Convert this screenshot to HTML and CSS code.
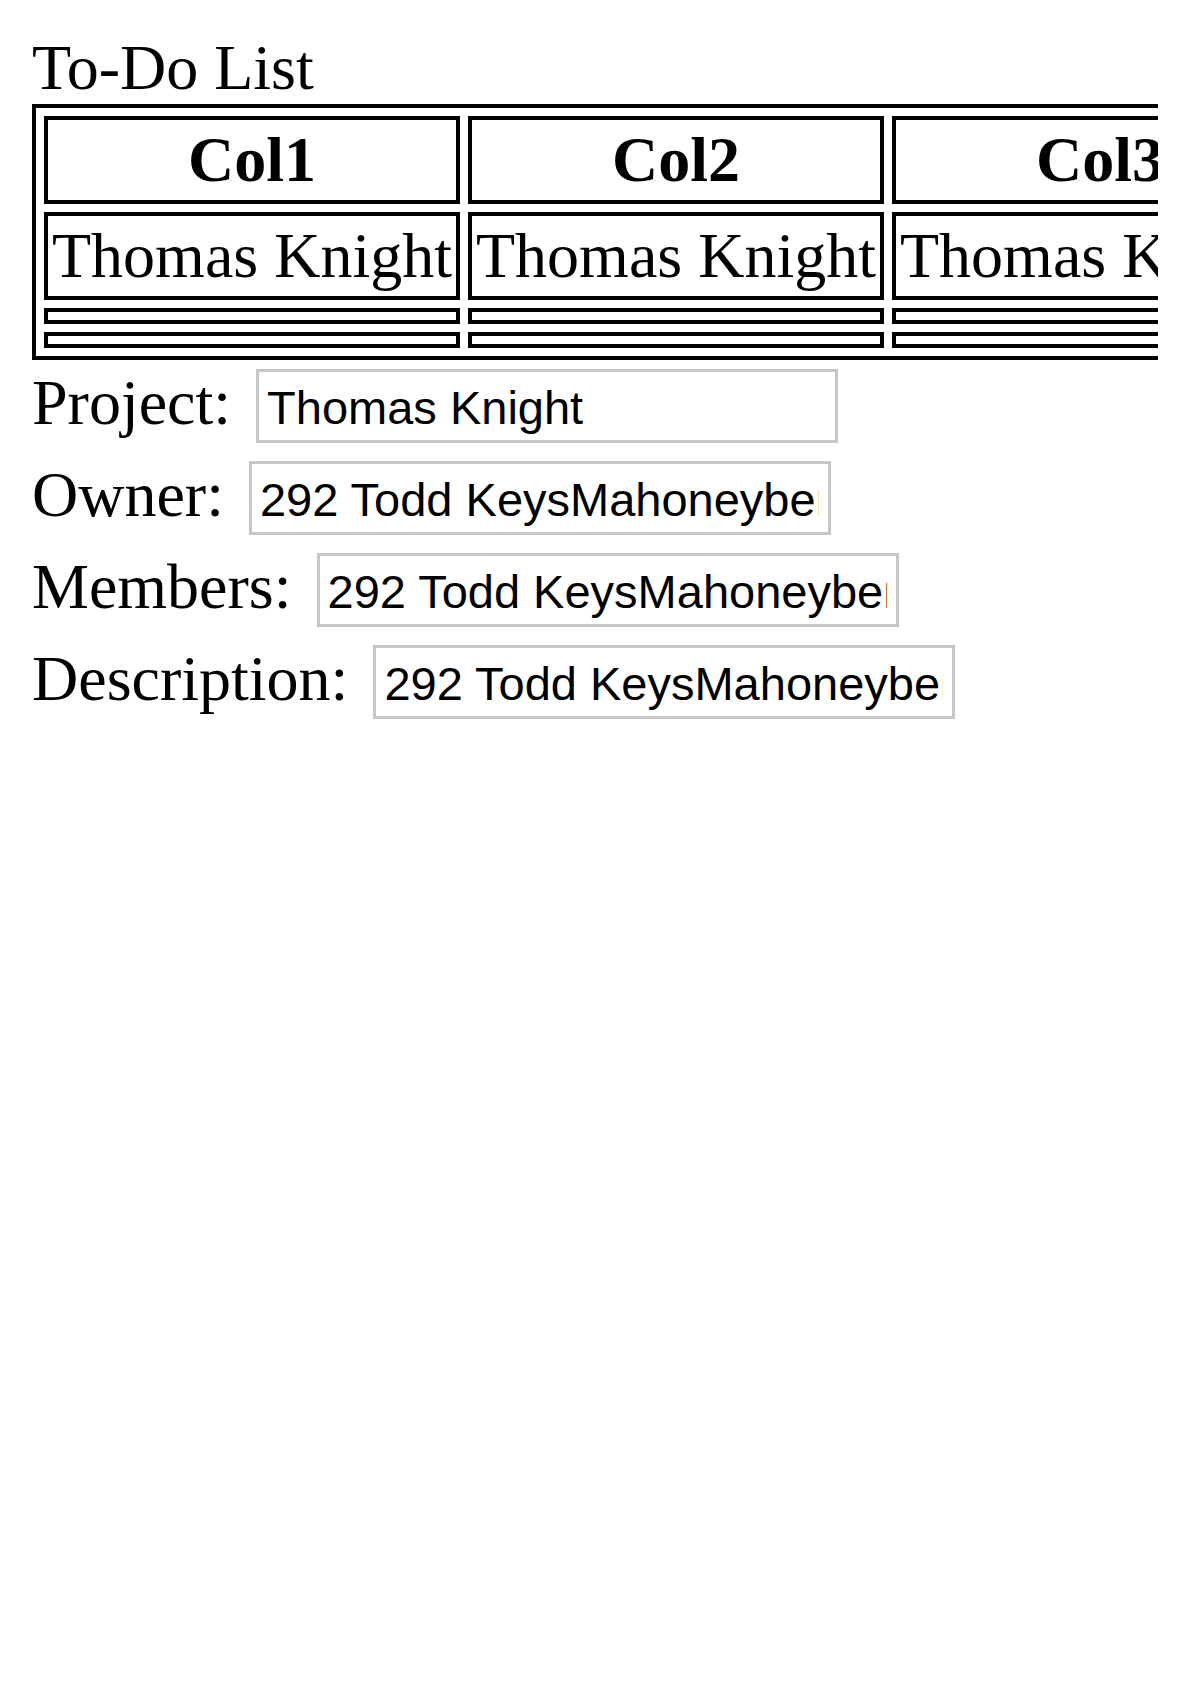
FILE: index.html
```html
<!DOCTYPE html>
<html>
<head>
<meta charset="utf-8">
<title>To-Do List</title>
<link rel="stylesheet" href="styles.css">
</head>
<body>
<div class="title">To-Do List</div>
<div class="table-wrap">
<table class="grid">
  <thead>
    <tr><th>Col1</th><th>Col2</th><th>Col3</th></tr>
  </thead>
  <tbody>
    <tr><td>Thomas Knight</td><td>Thomas Knight</td><td>Thomas Knight</td></tr>
    <tr><td></td><td></td><td></td></tr>
    <tr><td></td><td></td><td></td></tr>
  </tbody>
</table>
</div>
<form class="form">
  <div class="row"><label class="lbl">Project:</label><input class="field" type="text" value="Thomas Knight"></div>
  <div class="row"><label class="lbl">Owner:</label><input class="field" type="text" value="292 Todd KeysMahoneyberg Suite 120"></div>
  <div class="row"><label class="lbl">Members:</label><input class="field" type="text" value="292 Todd KeysMahoneyberg Suite 120"></div>
  <div class="row"><label class="lbl">Description:</label><input class="field" type="text" value="292 Todd KeysMahoneyberg Suite 120"></div>
</form>
</body>
</html>
```
FILE: styles.css
```css
html {
  background: #ffffff;
  overflow: hidden;
}
body {
  margin: 32px;
  font-family: "Liberation Serif", "Times New Roman", serif;
  font-size: 64px;
  line-height: 72px;
  color: #000;
}
.title {
  white-space: nowrap;
}
.table-wrap {
  width: calc(100vw - 32px);
  overflow: hidden;
}
.grid {
  width: 1288px;
  table-layout: fixed;
  border: 4px solid #000;
  border-collapse: separate;
  border-spacing: 8px;
  white-space: nowrap;
}
.grid th,
.grid td {
  width: 400px;
  border: 4px solid #000;
  padding: 4px;
  line-height: 72px;
}
.grid th {
  font-weight: bold;
  text-align: center;
}
.grid td {
  text-align: left;
}
.form {
  margin: 0;
}
.row {
  display: flex;
  align-items: baseline;
  gap: 25px;
  white-space: nowrap;
}
.lbl {
  line-height: 72px;
}
.field {
  box-sizing: border-box;
  width: 582px;
  height: 74px;
  margin: 9px 0;
  padding: 2px 9px 0 8px;
  border: 3px solid #c6c6c6;
  border-radius: 0;
  font-family: "Liberation Sans", Arial, sans-serif;
  font-size: 47px;
  color: #000;
  background: #fff;
  outline: none;
}
```
